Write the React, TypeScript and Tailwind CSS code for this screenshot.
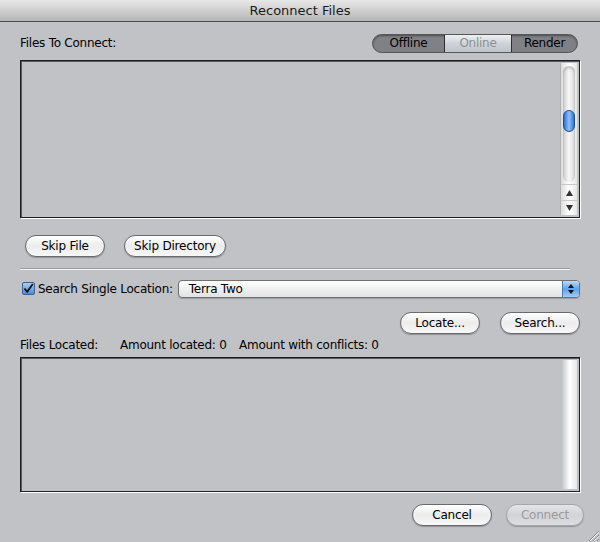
import React from "react";

const font = { fontFamily: '"DejaVu Sans", "Liberation Sans", sans-serif' };

const Pill = ({
  label,
  width,
  disabled,
}: {
  label: string;
  width: string;
  disabled?: boolean;
}) => (
  <button
    className={`${width} h-[22px] rounded-full border text-[12px] tracking-[-0.2px] leading-none flex items-center justify-center shadow-[0_1px_1px_rgba(0,0,0,0.25)] ${
      disabled
        ? "border-[#a6a7ab] text-[#9a9b9f] bg-gradient-to-b from-[#e4e5e8] via-[#d2d3d6] to-[#dcdde0]"
        : "border-[#6a6a6a] text-black bg-gradient-to-b from-white via-[#ececec] to-[#f8f8f8]"
    }`}
  >
    {label}
  </button>
);

const ScrollBar = () => (
  <div className="w-[17px] h-full flex flex-col bg-gradient-to-r from-[#dcdcdc] via-white to-[#e6e6e6] border-l border-[#b0b0b0]">
    <div className="flex-1 px-[2px] pt-[3px] pb-[2px] flex flex-col">
      <div className="flex-1 rounded-full bg-gradient-to-r from-[#cfcfcf] via-[#f8f8f8] to-[#d9d9d9] shadow-[inset_0_2px_3px_rgba(0,0,0,0.2)] flex flex-col pt-[44px]">
        <div className="mx-auto w-[12px] h-[22px] rounded-full border border-[#1d4f9a] bg-gradient-to-r from-[#2e6fd1] via-[#8fc2f5] to-[#2f73d6]" />
      </div>
    </div>
    <div className="h-[16px] flex items-center justify-center border-t border-[#c8c8c8]">
      <svg width="7" height="6" viewBox="0 0 7 6">
        <path d="M3.5 0 L7 6 L0 6 Z" fill="#333" />
      </svg>
    </div>
    <div className="h-[15px] flex items-center justify-center border-t border-[#c8c8c8]">
      <svg width="7" height="6" viewBox="0 0 7 6">
        <path d="M0 0 L7 0 L3.5 6 Z" fill="#333" />
      </svg>
    </div>
  </div>
);

export default function App() {
  return (
    <div
      className="w-[600px] h-[542px] bg-[#c1c2c6] flex flex-col relative overflow-hidden text-black"
      style={font}
    >
      <div className="h-[22px] shrink-0 bg-gradient-to-b from-[#e8e8e8] via-[#cfcfcf] to-[#b5b5b5] border-b border-[#4c4c4c] flex items-center justify-center text-[13px] text-[#1a1a1a]">
        Reconnect Files
      </div>

      <div className="flex flex-col px-[20px] tracking-[-0.25px]">
        <div className="mt-[12px] h-[18px] flex items-center justify-between">
          <span className="text-[12px]">Files To Connect:</span>
          <div className="mr-[2px] w-[206px] h-[19px] rounded-full border border-[#55565a] bg-[#808186] flex overflow-hidden text-[12px] shadow-[inset_0_1px_2px_rgba(0,0,0,0.4)]">
            <div className="w-[71px] flex items-center justify-center">Offline</div>
            <div className="w-[68px] flex items-center justify-center text-[#8e8f93] bg-gradient-to-b from-[#eef0f3] via-[#cfd3d9] to-[#bfc3ca] border-x border-[#2d2e33]">
              Online
            </div>
            <div className="flex-1 flex items-center justify-center">Render</div>
          </div>
        </div>

        <div className="mt-[8px] h-[158px] border border-[#1e1e1e] shadow-[1px_1px_0_#ffffff,inset_1px_1px_0_#5a5a5a] flex justify-end p-[2px]">
          <ScrollBar />
        </div>

        <div className="mt-[17px] flex gap-[19px] pl-[5px]">
          <Pill label="Skip File" width="w-[80px]" />
          <Pill label="Skip Directory" width="w-[102px]" />
        </div>

        <div className="mt-[11px] mr-[10px] h-[2px] border-t border-[#9a9b9f] bg-[#f4f4f4]" />

        <div className="mt-[9px] h-[19px] flex items-center">
          <div className="ml-[2px] w-[13px] h-[13px] rounded-[2px] border border-[#3f5f8f] bg-gradient-to-b from-[#a9cdf3] to-[#4b8ad6] flex items-center justify-center">
            <svg width="11" height="11" viewBox="0 0 11 11">
              <path d="M1.5 5.5 L4.2 8.8 L9.8 1" stroke="#111" strokeWidth="1.8" fill="none" />
            </svg>
          </div>
          <span className="ml-[3px] text-[12px]">Search Single Location:</span>
          <div className="ml-[5px] flex-1 h-[18px] rounded-[4px] border border-[#707070] bg-gradient-to-b from-white via-[#f0f0f0] to-[#e2e2e2] flex items-center shadow-[0_1px_1px_rgba(0,0,0,0.2)] overflow-hidden">
            <span className="flex-1 pl-[10px] text-[12px]">Terra Two</span>
            <div className="w-[17px] h-full bg-gradient-to-b from-[#bcdcf8] via-[#5fa2ea] to-[#9fcdf6] border-l border-[#4d79b5] flex flex-col items-center justify-center gap-[2px]">
              <svg width="6" height="4" viewBox="0 0 6 4">
                <path d="M3 0 L6 4 L0 4 Z" fill="#111" />
              </svg>
              <svg width="6" height="4" viewBox="0 0 6 4">
                <path d="M0 0 L6 0 L3 4 Z" fill="#111" />
              </svg>
            </div>
          </div>
        </div>

        <div className="mt-[14px] flex justify-end gap-[20px]">
          <Pill label="Locate..." width="w-[80px]" />
          <Pill label="Search..." width="w-[80px]" />
        </div>

        <div className="mt-[3px] h-[16px] flex items-center text-[12px]">
          <span className="w-[100px]">Files Located:</span>
          <span className="w-[119px]">Amount located: 0</span>
          <span>Amount with conflicts: 0</span>
        </div>

        <div className="mt-[4px] h-[135px] border border-[#1e1e1e] shadow-[1px_1px_0_#ffffff,inset_1px_1px_0_#5a5a5a] flex justify-end p-[2px]">
          <div className="w-[15px] h-full bg-gradient-to-r from-[#c4c5c9] via-white to-[#e8e8e8]" />
        </div>

        <div className="mt-[12px] flex justify-end gap-[14px] -mr-[4px]">
          <Pill label="Cancel" width="w-[80px]" />
          <Pill label="Connect" width="w-[78px]" disabled />
        </div>
      </div>

      <svg className="absolute right-0 bottom-0" width="14" height="14" viewBox="0 0 14 14">
        <path d="M13 3 L3 13 M13 7 L7 13 M13 11 L11 13" stroke="#8a8a8a" strokeWidth="1" />
        <path d="M13 4 L4 13 M13 8 L8 13" stroke="#f4f4f4" strokeWidth="1" />
      </svg>
    </div>
  );
}
